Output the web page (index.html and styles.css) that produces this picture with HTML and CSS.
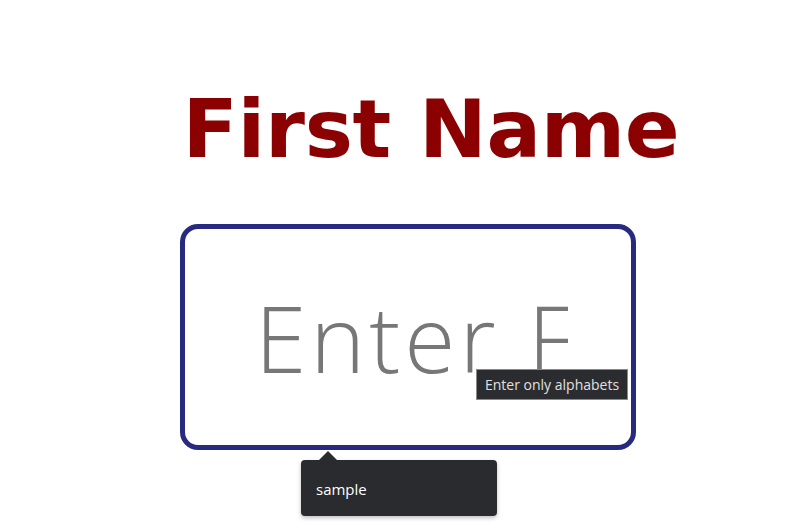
FILE: index.html
```html
<!DOCTYPE html>
<html>
<head>
<meta charset="utf-8">
<link rel="stylesheet" href="styles.css">
</head>
<body>
<main class="page">
  <h1 class="title">First Name</h1>
  <div class="field">
    <input class="name-input" type="text" placeholder="Enter First Name">
    <div class="native-tip">Enter only alphabets</div>
    <div class="popover"><span class="popover-text">sample</span></div>
  </div>
</main>
</body>
</html>
```
FILE: styles.css
```css
html, body {
  margin: 0;
  padding: 0;
  background: #ffffff;
}
.page {
  width: 796px;
  height: 532px;
  display: flex;
  flex-direction: column;
  align-items: center;
  overflow: hidden;
}
.title {
  margin: 79px 0 0 66px;
  font-family: "DejaVu Sans", sans-serif;
  font-weight: 700;
  font-size: 81px;
  line-height: 100px;
  color: #8b0000;
  letter-spacing: -0.3px;
}
.field {
  position: relative;
  margin-top: 45px;
  margin-left: 20px;
}
.name-input {
  display: block;
  box-sizing: border-box;
  width: 456px;
  height: 226px;
  border: 5px solid #272a7f;
  border-radius: 18px;
  padding: 0 63px 0 70px;
  font-family: "Open Sans", sans-serif;
  font-weight: 350;
  font-size: 93px;
  letter-spacing: 4px;
  color: #777;
  outline: none;
  background: #fff;
}
.name-input::placeholder {
  color: #777;
}
.native-tip {
  position: absolute;
  left: 296px;
  top: 145px;
  height: 31px;
  box-sizing: border-box;
  padding: 0 8px;
  background: #2b2c30;
  border: 1px solid #8a8a8a;
  color: #e0e0e0;
  font-family: "Open Sans", sans-serif;
  font-size: 14px;
  line-height: 29px;
  white-space: nowrap;
}
.popover {
  position: absolute;
  left: 121px;
  top: 236px;
  width: 196px;
  height: 56px;
  box-sizing: border-box;
  padding: 0 15px;
  display: flex;
  align-items: center;
  background: #2a2b2f;
  border-radius: 4px;
  box-shadow: 0 2px 4px rgba(0,0,0,0.25);
}
.popover::before {
  content: "";
  position: absolute;
  left: 18px;
  top: -9px;
  border-left: 9px solid transparent;
  border-right: 9px solid transparent;
  border-bottom: 9px solid #2a2b2f;
}
.popover-text {
  color: #ffffff;
  font-family: "Open Sans", sans-serif;
  font-size: 15px;
  margin-top: 2px;
}
```
